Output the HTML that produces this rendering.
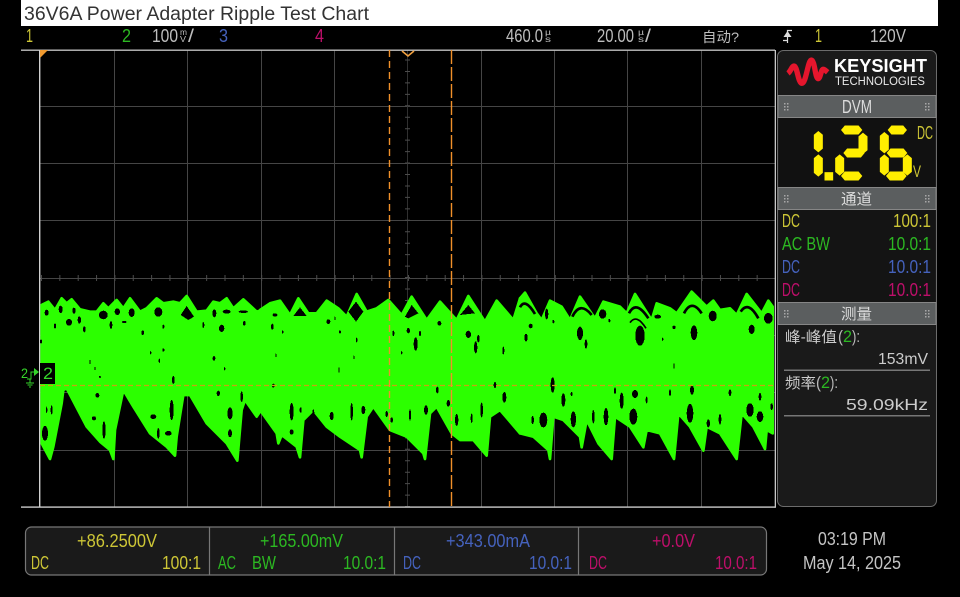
<!DOCTYPE html>
<html><head><meta charset="utf-8"><style>
html,body{margin:0;padding:0;background:#000;width:960px;height:597px;overflow:hidden}
svg{display:block}
text{font-family:"Liberation Sans","Noto Sans CJK SC",sans-serif}
.s{font-size:18px}
.y{fill:#cdc636}.g{fill:#2cb822}.b{fill:#4562bd}.m{fill:#bd0f6a}.w{fill:#bdbdbd}
</style></head><body>
<svg width="960" height="597" viewBox="0 0 960 597" xmlns="http://www.w3.org/2000/svg">
<rect width="960" height="597" fill="#000"/>
<!-- title -->
<rect x="21" y="0" width="917" height="26" fill="#fff"/>
<text x="24" y="20" font-size="19" fill="#333" textLength="345" lengthAdjust="spacingAndGlyphs">36V6A Power Adapter Ripple Test Chart</text>
<!-- top status -->
<g class="s">
<text class="y" x="26" y="42" textLength="7" lengthAdjust="spacingAndGlyphs">1</text>
<text class="g" x="122" y="42" textLength="9" lengthAdjust="spacingAndGlyphs">2</text>
<text class="w" x="152" y="42" textLength="26" lengthAdjust="spacingAndGlyphs">100</text>
<text class="w" x="180" y="35" font-size="8" textLength="7" lengthAdjust="spacingAndGlyphs">m</text>
<text class="w" x="180" y="42" font-size="8" textLength="6" lengthAdjust="spacingAndGlyphs">V</text>
<text class="w" x="188" y="42" textLength="6" lengthAdjust="spacingAndGlyphs">/</text>
<text class="b" x="219" y="42" textLength="9" lengthAdjust="spacingAndGlyphs">3</text>
<text class="m" x="315" y="42" textLength="9" lengthAdjust="spacingAndGlyphs">4</text>
<text class="w" x="506" y="42" textLength="37" lengthAdjust="spacingAndGlyphs">460.0</text>
<text class="w" x="545" y="35" font-size="8" textLength="6" lengthAdjust="spacingAndGlyphs">µ</text>
<text class="w" x="545" y="42" font-size="8" textLength="6" lengthAdjust="spacingAndGlyphs">s</text>
<text class="w" x="597" y="42" textLength="37" lengthAdjust="spacingAndGlyphs">20.00</text>
<text class="w" x="638" y="35" font-size="8" textLength="6" lengthAdjust="spacingAndGlyphs">µ</text>
<text class="w" x="638" y="42" font-size="8" textLength="6" lengthAdjust="spacingAndGlyphs">s</text>
<text class="w" x="645" y="42" textLength="6" lengthAdjust="spacingAndGlyphs">/</text>
<text class="w" x="702" y="42" font-size="14" textLength="37" lengthAdjust="spacingAndGlyphs">自动?</text>
<text class="y" x="815" y="42" textLength="7" lengthAdjust="spacingAndGlyphs">1</text>
<text class="w" x="870" y="42" textLength="36" lengthAdjust="spacingAndGlyphs">120V</text>
</g>
<path d="M792 30.500H787.500V43M783 40.500H787.500" fill="none" stroke="#ddd" stroke-width="1.200"/>
<polygon points="787.500,31 791.500,37 783.500,37" fill="#ddd"/>
<!-- grid -->
<g stroke="#454545" stroke-width="1" fill="none">
<path d="M40 106.500H775M40 163.500H775M40 220.500H775M40 278.500H775M40 335.500H775M40 392.500H775M40 450.500H775"/>
<path d="M114.500 50V507M187.500 50V507M261.500 50V507M334.500 50V507M481.500 50V507M554.500 50V507M627.500 50V507M701.500 50V507"/>
<path d="M407.500 50V507" stroke="#303030"/>
</g>
<line x1="41" y1="278" x2="775" y2="278" stroke="#4c4c4c" stroke-width="6" stroke-dasharray="1 17.35"/>
<line x1="407.500" y1="59.500" x2="407.500" y2="507" stroke="#4c4c4c" stroke-width="5" stroke-dasharray="1 10.45"/>
<rect x="21" y="49.500" width="754" height="1.400" fill="#bdbdbd"/>
<rect x="21" y="506.400" width="754" height="1.400" fill="#c8c8c8"/>
<rect x="774.700" y="50" width="1.300" height="457.800" fill="#c8c8c8"/>
<rect x="39" y="50" width="1.400" height="457" fill="#d0d0d0"/>
<!-- waveform -->
<g fill="#2cff00" stroke="#2cff00" stroke-width="8" stroke-linejoin="round">
<polygon transform="translate(0 270) scale(.33333)" points="125,105 145,95 165,120 185,85 200,100 215,88 240,118 270,125 290,125 310,100 325,115 350,90 370,115 390,85 420,125 440,115 470,85 490,100 520,95 540,100 560,78 590,125 620,122 640,95 660,100 680,85 700,115 730,88 770,125 780,122 780,425 770,440 735,390 725,420 712,572 680,520 620,460 570,375 550,375 530,500 525,557 500,530 450,490 400,410 370,360 345,480 340,567 330,540 300,515 260,470 200,355 190,360 185,400 160,530 150,567 125,520"/>
<polygon transform="translate(260 270) scale(.33333)" points="0,120 30,100 60,92 90,135 115,85 145,130 170,130 200,92 235,115 260,140 290,72 320,125 350,115 385,90 425,135 455,80 500,150 540,95 590,150 625,78 675,155 710,92 760,150 780,85 780,490 720,420 690,440 680,557 640,510 600,510 575,490 530,410 510,430 495,567 490,550 440,500 390,480 340,410 320,440 305,562 300,540 240,500 200,470 160,420 130,450 120,562 110,530 65,495 55,520 50,490 0,420"/>
<polygon transform="translate(520 270) scale(.33333)" points="0,85 15,68 50,130 65,150 90,92 125,110 150,150 180,80 225,145 250,95 300,110 320,130 345,72 395,150 410,100 450,115 470,130 515,65 560,110 580,92 600,120 630,115 650,135 680,72 725,130 745,92 758,110 758,490 740,480 735,537 700,470 665,430 650,567 600,490 560,470 550,542 510,470 475,430 462,567 420,490 380,480 370,532 330,470 285,440 275,567 235,520 200,450 185,532 180,500 130,450 100,440 90,567 85,540 40,500 0,490"/>
</g>
<!-- holes -->
<g fill="#000" shape-rendering="crispEdges">
<g transform="translate(0 270) scale(.33333)">
<ellipse cx="140" cy="128" rx="6" ry="9"/><ellipse cx="182" cy="118" rx="6" ry="11"/><ellipse cx="222" cy="122" rx="5" ry="9"/><ellipse cx="310" cy="135" rx="13" ry="13"/><ellipse cx="352" cy="125" rx="8" ry="10"/><ellipse cx="395" cy="128" rx="9" ry="13"/><ellipse cx="475" cy="126" rx="12" ry="14"/><polygon points="542,135 560,108 582,140 565,150"/><ellipse cx="643" cy="130" rx="6" ry="12"/><ellipse cx="680" cy="125" rx="12" ry="6"/><ellipse cx="730" cy="125" rx="14" ry="4"/><ellipse cx="207" cy="157" rx="9" ry="10"/><ellipse cx="238" cy="150" rx="5" ry="11"/><ellipse cx="165" cy="168" rx="3" ry="8"/><ellipse cx="253" cy="178" rx="4" ry="9"/><ellipse cx="333" cy="165" rx="4" ry="12"/><ellipse cx="373" cy="156" rx="7" ry="3"/><ellipse cx="428" cy="188" rx="4" ry="7"/><ellipse cx="490" cy="170" rx="3" ry="6"/><ellipse cx="610" cy="165" rx="3" ry="9"/><ellipse cx="665" cy="175" rx="8" ry="11"/><ellipse cx="733" cy="160" rx="4" ry="7"/><ellipse cx="123" cy="214" rx="3" ry="6"/>
<ellipse cx="135" cy="490" rx="9" ry="22"/><ellipse cx="155" cy="420" rx="3" ry="14"/><ellipse cx="140" cy="420" rx="2" ry="10"/><ellipse cx="292" cy="376" rx="6" ry="7"/><ellipse cx="312" cy="480" rx="5" ry="26"/><ellipse cx="460" cy="440" rx="9" ry="7"/><ellipse cx="505" cy="490" rx="10" ry="7"/><ellipse cx="515" cy="420" rx="6" ry="30"/><ellipse cx="520" cy="330" rx="4" ry="12"/><ellipse cx="690" cy="430" rx="8" ry="18"/><ellipse cx="690" cy="490" rx="6" ry="12"/><ellipse cx="655" cy="370" rx="5" ry="8"/><ellipse cx="282" cy="445" rx="6" ry="6"/><ellipse cx="475" cy="490" rx="4" ry="16"/><ellipse cx="725" cy="380" rx="4" ry="16"/>
<ellipse cx="285" cy="296" rx="2" ry="5"/><ellipse cx="270" cy="276" rx="2" ry="6"/><ellipse cx="300" cy="321" rx="3" ry="3"/><ellipse cx="478" cy="272" rx="2" ry="7"/><ellipse cx="490" cy="240" rx="3" ry="5"/><ellipse cx="642" cy="265" rx="4" ry="7"/><ellipse cx="452" cy="248" rx="2" ry="5"/><ellipse cx="674" cy="296" rx="2" ry="5"/>
</g>
<g transform="translate(260 270) scale(.33333)">
<polygon points="100,138 120,112 140,138"/><polygon points="265,125 288,95 310,125 288,155"/><polygon points="435,140 455,105 475,130 445,145"/><polygon points="600,135 625,105 645,130"/>
<ellipse cx="45" cy="135" rx="7" ry="5"/><ellipse cx="205" cy="155" rx="6" ry="7"/><ellipse cx="37" cy="170" rx="4" ry="9"/><ellipse cx="68" cy="186" rx="2" ry="5"/><ellipse cx="225" cy="145" rx="2" ry="5"/><ellipse cx="240" cy="186" rx="3" ry="5"/><ellipse cx="400" cy="190" rx="3" ry="8"/><ellipse cx="445" cy="182" rx="5" ry="8"/><ellipse cx="480" cy="190" rx="3" ry="8"/><ellipse cx="467" cy="222" rx="6" ry="20"/><ellipse cx="538" cy="160" rx="6" ry="7"/><ellipse cx="625" cy="193" rx="8" ry="11"/><ellipse cx="655" cy="206" rx="4" ry="11"/><ellipse cx="647" cy="232" rx="5" ry="18"/><ellipse cx="730" cy="242" rx="3" ry="12"/><ellipse cx="290" cy="210" rx="2" ry="8"/><ellipse cx="237" cy="300" rx="2" ry="8"/><ellipse cx="282" cy="262" rx="2" ry="5"/><ellipse cx="425" cy="248" rx="2" ry="5"/><ellipse cx="48" cy="256" rx="2" ry="5"/>
<ellipse cx="95" cy="425" rx="6" ry="26"/><ellipse cx="122" cy="420" rx="3" ry="8"/><ellipse cx="95" cy="486" rx="6" ry="8"/><ellipse cx="215" cy="438" rx="6" ry="12"/><ellipse cx="160" cy="430" rx="3" ry="12"/><ellipse cx="275" cy="425" rx="4" ry="26"/><ellipse cx="310" cy="420" rx="6" ry="12"/><ellipse cx="380" cy="432" rx="4" ry="9"/><ellipse cx="395" cy="450" rx="4" ry="8"/><ellipse cx="450" cy="435" rx="3" ry="18"/><ellipse cx="498" cy="420" rx="6" ry="14"/><ellipse cx="40" cy="347" rx="4" ry="6"/><ellipse cx="532" cy="360" rx="4" ry="10"/><ellipse cx="590" cy="450" rx="5" ry="18"/><ellipse cx="635" cy="445" rx="3" ry="14"/><ellipse cx="565" cy="400" rx="5" ry="10"/><ellipse cx="705" cy="345" rx="4" ry="10"/><ellipse cx="733" cy="382" rx="6" ry="16"/><ellipse cx="665" cy="420" rx="4" ry="22"/>
</g>
<g transform="translate(520 270) scale(.33333)">
<ellipse cx="80" cy="132" rx="5" ry="16"/><ellipse cx="248" cy="132" rx="11" ry="14"/><ellipse cx="360" cy="197" rx="14" ry="30"/><ellipse cx="180" cy="190" rx="9" ry="20"/><ellipse cx="198" cy="222" rx="4" ry="14"/><ellipse cx="18" cy="203" rx="5" ry="12"/><ellipse cx="32" cy="168" rx="6" ry="7"/><ellipse cx="413" cy="140" rx="10" ry="6"/><ellipse cx="522" cy="188" rx="10" ry="22"/><ellipse cx="578" cy="138" rx="12" ry="16"/><ellipse cx="695" cy="178" rx="9" ry="14"/><ellipse cx="745" cy="145" rx="13" ry="16"/><ellipse cx="462" cy="172" rx="5" ry="5"/><ellipse cx="100" cy="155" rx="3" ry="5"/><ellipse cx="268" cy="152" rx="3" ry="5"/><ellipse cx="428" cy="208" rx="2" ry="5"/><ellipse cx="462" cy="288" rx="2" ry="8"/>
<ellipse cx="98" cy="345" rx="6" ry="23"/><ellipse cx="130" cy="390" rx="6" ry="20"/><ellipse cx="155" cy="372" rx="3" ry="6"/><ellipse cx="38" cy="450" rx="4" ry="12"/><ellipse cx="70" cy="450" rx="12" ry="22"/><ellipse cx="160" cy="448" rx="8" ry="24"/><ellipse cx="220" cy="440" rx="4" ry="20"/><ellipse cx="258" cy="440" rx="7" ry="26"/><ellipse cx="305" cy="392" rx="6" ry="24"/><ellipse cx="345" cy="372" rx="9" ry="12"/><ellipse cx="340" cy="440" rx="12" ry="24"/><ellipse cx="510" cy="430" rx="10" ry="28"/><ellipse cx="516" cy="360" rx="6" ry="14"/><ellipse cx="565" cy="460" rx="5" ry="12"/><ellipse cx="600" cy="448" rx="4" ry="16"/><ellipse cx="630" cy="368" rx="4" ry="10"/><ellipse cx="690" cy="420" rx="11" ry="20"/><ellipse cx="720" cy="440" rx="10" ry="16"/><ellipse cx="720" cy="380" rx="4" ry="12"/><ellipse cx="450" cy="368" rx="3" ry="10"/><ellipse cx="380" cy="390" rx="3" ry="10"/><ellipse cx="285" cy="362" rx="3" ry="10"/><ellipse cx="755" cy="410" rx="4" ry="10"/>
</g>
</g>
<g transform="translate(520 270) scale(.33333)" fill="none" stroke="#000" stroke-width="8">
<path d="M0 112Q15 82 45 132"/>
<path d="M157 140Q180 92 215 135"/>
<path d="M327 130Q348 88 385 145"/>
<path d="M330 158Q350 130 378 175" stroke-width="5"/>
<path d="M492 130Q515 85 545 130"/>
<path d="M662 125Q685 90 715 145"/>
</g>
<!-- cursors -->
<line x1="40" y1="385.500" x2="775" y2="385.500" stroke="#c8a410" stroke-width="1.200" stroke-dasharray="5 3"/>
<line x1="389.500" y1="50" x2="389.500" y2="507" stroke="#f0902a" stroke-width="1.400" stroke-dasharray="7 4"/>
<line x1="451.500" y1="50" x2="451.500" y2="507" stroke="#f0902a" stroke-width="1.400" stroke-dasharray="14 3"/>
<polygon points="40,50 48,50 40,58" fill="#f09a30"/>
<path d="M402 51L408 56L414 51" fill="none" stroke="#f0a040" stroke-width="1.600"/>
<!-- channel 2 marker -->
<rect x="40" y="363" width="15" height="21" fill="#000"/>
<text x="43" y="379" font-size="17" fill="#35d52a" textLength="10" lengthAdjust="spacingAndGlyphs">2</text>
<text x="21" y="378" font-size="14" fill="#35d52a" textLength="7" lengthAdjust="spacingAndGlyphs">2</text>
<path d="M27 379H31V372H35" fill="none" stroke="#35d52a" stroke-width="1"/>
<polygon points="34,368 39,372 34,376" fill="#35d52a"/>
<path d="M30 379V383M26 383H34M27.500 385H32.500M29 387H31" fill="none" stroke="#35d52a" stroke-width="1"/>
<!-- right panel -->
<rect x="777.500" y="50.500" width="159" height="456" rx="6" fill="#1a1a1a" stroke="#6c6c6c"/>
<path transform="translate(778 48) scale(.33333)" d="M30 76C38 70 42 54 48 54C58 54 60 106 72 106C84 106 90 36 100 36C110 36 112 92 120 92C128 92 128 64 136 64C140 64 143 68 149 73" fill="none" stroke="#e5162d" stroke-width="16"/>
<text x="834" y="72" font-size="18" font-weight="bold" fill="#fff" textLength="93" lengthAdjust="spacingAndGlyphs">KEYSIGHT</text>
<text x="835" y="85" font-size="11.500" fill="#e8e8e8" textLength="90" lengthAdjust="spacingAndGlyphs">TECHNOLOGIES</text>
<!-- bars -->
<g fill="#5b5e5f" stroke="#868686" stroke-width="1">
<rect x="778" y="95.500" width="158" height="22"/>
<rect x="778" y="187.500" width="158" height="22"/>
<rect x="778" y="302.500" width="158" height="22"/>
</g>
<rect x="779" y="118" width="156" height="69" fill="#111"/>
<rect x="779" y="210" width="156" height="92" fill="#141414"/>
<g fill="#a8a8a8">
<rect x="784" y="103" width="1.500" height="1.500"/><rect x="787" y="103" width="1.500" height="1.500"/><rect x="784" y="106" width="1.500" height="1.500"/><rect x="787" y="106" width="1.500" height="1.500"/><rect x="784" y="109" width="1.500" height="1.500"/><rect x="787" y="109" width="1.500" height="1.500"/>
<rect x="925" y="103" width="1.500" height="1.500"/><rect x="928" y="103" width="1.500" height="1.500"/><rect x="925" y="106" width="1.500" height="1.500"/><rect x="928" y="106" width="1.500" height="1.500"/><rect x="925" y="109" width="1.500" height="1.500"/><rect x="928" y="109" width="1.500" height="1.500"/>
<rect x="784" y="195" width="1.500" height="1.500"/><rect x="787" y="195" width="1.500" height="1.500"/><rect x="784" y="198" width="1.500" height="1.500"/><rect x="787" y="198" width="1.500" height="1.500"/><rect x="784" y="201" width="1.500" height="1.500"/><rect x="787" y="201" width="1.500" height="1.500"/>
<rect x="925" y="195" width="1.500" height="1.500"/><rect x="928" y="195" width="1.500" height="1.500"/><rect x="925" y="198" width="1.500" height="1.500"/><rect x="928" y="198" width="1.500" height="1.500"/><rect x="925" y="201" width="1.500" height="1.500"/><rect x="928" y="201" width="1.500" height="1.500"/>
<rect x="784" y="310" width="1.500" height="1.500"/><rect x="787" y="310" width="1.500" height="1.500"/><rect x="784" y="313" width="1.500" height="1.500"/><rect x="787" y="313" width="1.500" height="1.500"/><rect x="784" y="316" width="1.500" height="1.500"/><rect x="787" y="316" width="1.500" height="1.500"/>
<rect x="925" y="310" width="1.500" height="1.500"/><rect x="928" y="310" width="1.500" height="1.500"/><rect x="925" y="313" width="1.500" height="1.500"/><rect x="928" y="313" width="1.500" height="1.500"/><rect x="925" y="316" width="1.500" height="1.500"/><rect x="928" y="316" width="1.500" height="1.500"/>
</g>
<text x="842" y="113" font-size="18" fill="#ddd" textLength="30" lengthAdjust="spacingAndGlyphs">DVM</text>
<text x="841" y="204" font-size="15" fill="#ddd" textLength="31" lengthAdjust="spacingAndGlyphs">通道</text>
<text x="841" y="319" font-size="15" fill="#ddd" textLength="31" lengthAdjust="spacingAndGlyphs">测量</text>
<!-- 7-seg -->
<g transform="translate(770 90) scale(.33333)" fill="#ffee00" stroke="#ffee00" stroke-width="3">
<polygon points="145,125 157,135 157,175 145,185 133,175 133,135"/>
<polygon points="145,195 157,205 157,248 145,258 133,248 133,205"/>
<rect x="165" y="248" width="23" height="22"/>
<polygon points="215,120 225,108 265,108 275,120 265,132 225,132"/>
<polygon points="279,130 291,140 291,180 279,190 267,180 267,140"/>
<polygon points="222,189 232,177 272,177 282,189 272,201 232,201"/>
<polygon points="209,195 221,205 221,245 209,255 197,245 197,205"/>
<polygon points="215,258 225,246 265,246 275,258 265,270 225,270"/>
<polygon points="355,120 365,108 399,108 409,120 399,132 365,132"/>
<polygon points="343,128 355,138 355,178 343,188 331,178 331,138"/>
<polygon points="352,189 362,177 400,177 410,189 400,201 362,201"/>
<polygon points="343,195 355,205 355,245 343,255 331,245 331,205"/>
<polygon points="412,195 424,205 424,245 412,255 400,245 400,205"/>
<polygon points="350,258 360,246 398,246 408,258 398,270 360,270"/>
</g>
<text class="y" x="917" y="139" font-size="18" textLength="16" lengthAdjust="spacingAndGlyphs">DC</text>
<text class="y" x="913" y="177" font-size="17" textLength="8" lengthAdjust="spacingAndGlyphs">V</text>
<!-- channels -->
<g class="s">
<text class="y" x="782" y="227" textLength="18" lengthAdjust="spacingAndGlyphs">DC</text>
<text class="y" x="893" y="227" textLength="38" lengthAdjust="spacingAndGlyphs">100:1</text>
<text class="g" x="782" y="250" textLength="48" lengthAdjust="spacingAndGlyphs">AC BW</text>
<text class="g" x="888" y="250" textLength="43" lengthAdjust="spacingAndGlyphs">10.0:1</text>
<text class="b" x="782" y="273" textLength="18" lengthAdjust="spacingAndGlyphs">DC</text>
<text class="b" x="888" y="273" textLength="43" lengthAdjust="spacingAndGlyphs">10.0:1</text>
<text class="m" x="782" y="296" textLength="18" lengthAdjust="spacingAndGlyphs">DC</text>
<text class="m" x="888" y="296" textLength="43" lengthAdjust="spacingAndGlyphs">10.0:1</text>
</g>
<!-- measurements -->
<text x="785" y="342" font-size="15" fill="#ccc" textLength="52" lengthAdjust="spacingAndGlyphs">峰-峰值</text>
<text x="838" y="342" font-size="17" fill="#bbb" textLength="5" lengthAdjust="spacingAndGlyphs">(</text>
<text class="g" x="843" y="342" font-size="17" textLength="9" lengthAdjust="spacingAndGlyphs">2</text>
<text x="852" y="342" font-size="17" fill="#bbb" textLength="8" lengthAdjust="spacingAndGlyphs">):</text>
<text x="878" y="364" font-size="16" fill="#ccc" textLength="50" lengthAdjust="spacingAndGlyphs">153mV</text>
<rect x="784" y="369.500" width="146" height="1.500" fill="#777"/>
<text x="785" y="388" font-size="15" fill="#ccc" textLength="31" lengthAdjust="spacingAndGlyphs">频率</text>
<text x="816" y="388" font-size="17" fill="#bbb" textLength="5" lengthAdjust="spacingAndGlyphs">(</text>
<text class="g" x="821" y="388" font-size="17" textLength="9" lengthAdjust="spacingAndGlyphs">2</text>
<text x="830" y="388" font-size="17" fill="#bbb" textLength="8" lengthAdjust="spacingAndGlyphs">):</text>
<text x="846" y="410" font-size="16" fill="#ccc" textLength="82" lengthAdjust="spacingAndGlyphs">59.09kHz</text>
<rect x="784" y="415" width="146" height="1.500" fill="#777"/>
<!-- bottom panel -->
<rect x="25.500" y="527" width="741" height="48" rx="6" fill="#1a1a1a" stroke="#777" stroke-width="1.200"/>
<path d="M209.500 527V575M394.500 527V575M578.500 527V575" stroke="#777" stroke-width="1.200"/>
<g class="s">
<text class="y" x="77" y="547" textLength="80" lengthAdjust="spacingAndGlyphs">+86.2500V</text>
<text class="y" x="31" y="569" textLength="18" lengthAdjust="spacingAndGlyphs">DC</text>
<text class="y" x="162" y="569" textLength="39" lengthAdjust="spacingAndGlyphs">100:1</text>
<text class="g" x="260" y="547" textLength="83" lengthAdjust="spacingAndGlyphs">+165.00mV</text>
<text class="g" x="218" y="569" textLength="18" lengthAdjust="spacingAndGlyphs">AC</text>
<text class="g" x="252" y="569" textLength="24" lengthAdjust="spacingAndGlyphs">BW</text>
<text class="g" x="343" y="569" textLength="43" lengthAdjust="spacingAndGlyphs">10.0:1</text>
<text class="b" x="446" y="547" textLength="84" lengthAdjust="spacingAndGlyphs">+343.00mA</text>
<text class="b" x="403" y="569" textLength="18" lengthAdjust="spacingAndGlyphs">DC</text>
<text class="b" x="529" y="569" textLength="43" lengthAdjust="spacingAndGlyphs">10.0:1</text>
<text class="m" x="652" y="547" textLength="43" lengthAdjust="spacingAndGlyphs">+0.0V</text>
<text class="m" x="589" y="569" textLength="18" lengthAdjust="spacingAndGlyphs">DC</text>
<text class="m" x="715" y="569" textLength="42" lengthAdjust="spacingAndGlyphs">10.0:1</text>
<text x="818" y="545" fill="#c4c4c4" textLength="68" lengthAdjust="spacingAndGlyphs">03:19 PM</text>
<text x="803" y="569" fill="#c4c4c4" textLength="98" lengthAdjust="spacingAndGlyphs">May 14, 2025</text>
</g>
</svg>
</body></html>
